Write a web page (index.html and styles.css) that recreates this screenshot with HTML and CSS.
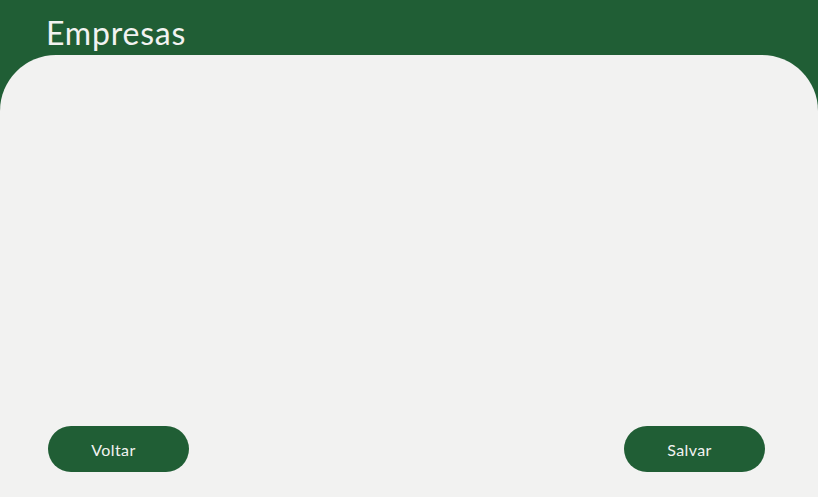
FILE: index.html
```html
<!DOCTYPE html>
<html lang="pt">
<head>
<meta charset="utf-8">
<title>Empresas</title>
<link rel="stylesheet" href="styles.css">
</head>
<body>
<div class="app">
  <header class="topbar">
    <h1 class="title">Empresas</h1>
  </header>
  <main class="panel">
    <div class="content"></div>
    <div class="actions">
      <button class="btn">Voltar</button>
      <button class="btn">Salvar</button>
    </div>
  </main>
</div>
</body>
</html>
```
FILE: styles.css
```css
html, body {
  margin: 0;
  padding: 0;
  height: 100%;
}
body {
  background: #205e35;
  font-family: "Lato", "Open Sans", sans-serif;
}
.app {
  display: flex;
  flex-direction: column;
  height: 100%;
}
.topbar {
  height: 55px;
  padding-left: 46px;
  box-sizing: border-box;
  display: flex;
  align-items: flex-start;
}
.title {
  margin: 0;
  padding-top: 13px;
  font-size: 32px;
  font-weight: 400;
  line-height: 40px;
  letter-spacing: 0.8px;
  color: #f2f2f1;
}
.panel {
  flex: 1;
  background: #f2f2f1;
  border-radius: 56px 56px 0 0;
  display: flex;
  flex-direction: column;
  padding: 0 53px 25px 48px;
}
.content {
  flex: 1;
}
.actions {
  display: flex;
  justify-content: space-between;
}
.btn {
  width: 141px;
  height: 46px;
  border: none;
  border-radius: 23px;
  background: #205e35;
  color: #f2f2f1;
  font-family: "Lato", "Open Sans", sans-serif;
  font-size: 16px;
  padding: 0 10px 0 0;
  letter-spacing: 0.4px;
}
```
